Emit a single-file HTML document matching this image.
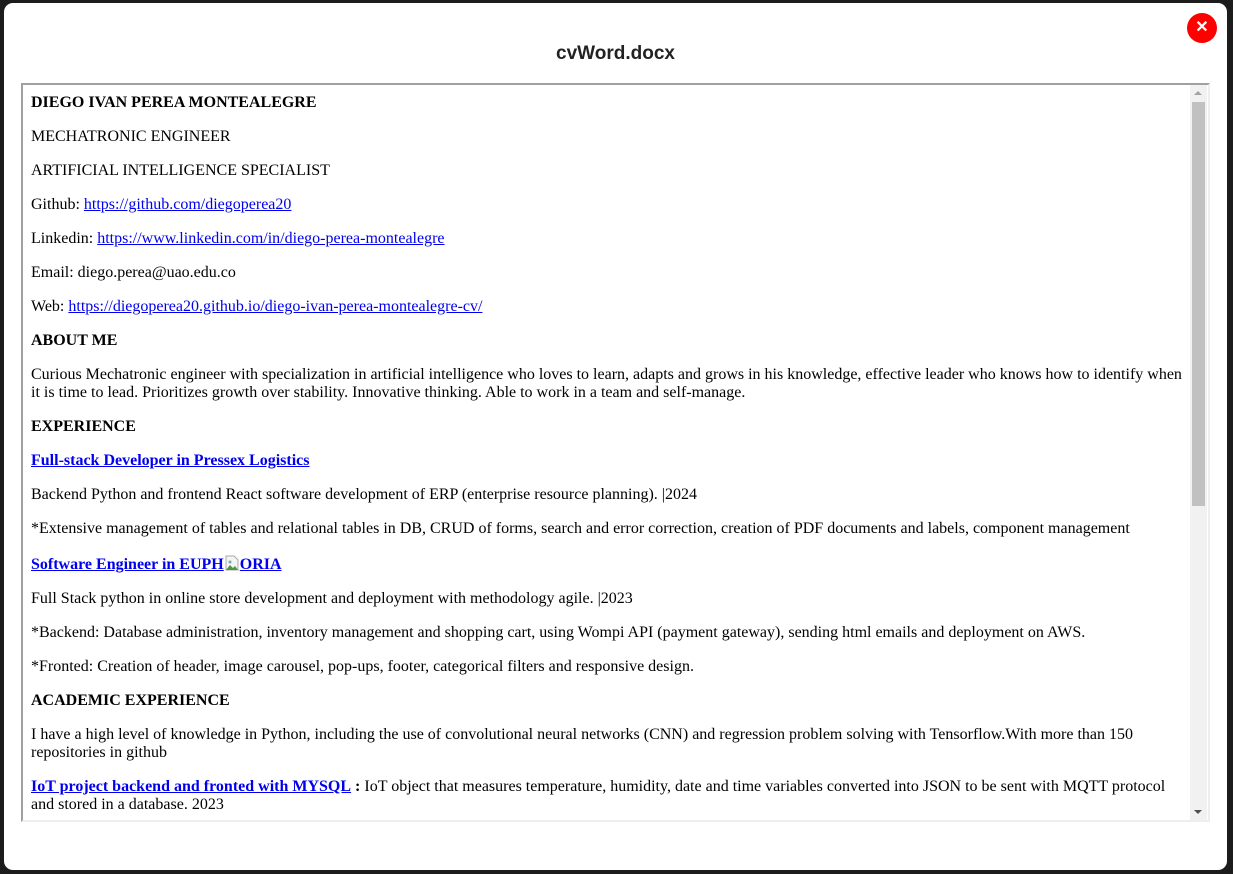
<!DOCTYPE html>
<html><head><meta charset="utf-8"><style>
html,body{margin:0;padding:0;}
body{width:1233px;height:874px;background:#1c1c1c;position:relative;overflow:hidden;font-family:"Liberation Serif",serif;}
.modal{position:absolute;left:4px;top:3px;width:1223px;height:867px;background:#fff;border-radius:9px;}
.title{position:absolute;left:0;right:0;top:40px;text-align:center;font:bold 19px "Liberation Sans",sans-serif;color:#222;}
.close{position:absolute;left:1183px;top:10px;width:30px;height:30px;border-radius:50%;background:#f00;color:#fff;font:bold 16px "Liberation Sans",sans-serif;text-align:center;line-height:30px;}
.frame{position:absolute;left:17px;top:80px;width:1185px;height:735px;border-top:2px solid #a0a0a0;border-left:2px solid #a0a0a0;border-right:2px solid #eee;border-bottom:2px solid #eee;overflow:hidden;}
.content{position:absolute;left:8px;top:9px;width:1152px;font-size:16px;line-height:18px;color:#000;}
.content p{margin:0 0 16px 0;}
a{color:#00e;text-decoration:underline;}
.sb{position:absolute;right:1px;top:0;width:17px;height:735px;background:#f1f1f1;}
.thumb{position:absolute;left:2px;top:17px;width:13px;height:404px;background:#c1c1c1;}
.up{position:absolute;left:4px;top:6px;width:0;height:0;border-left:4px solid transparent;border-right:4px solid transparent;border-bottom:4px solid #a3a3a3;}
.dn{position:absolute;left:4px;bottom:6px;width:0;height:0;border-left:4px solid transparent;border-right:4px solid transparent;border-top:4px solid #505050;}
</style></head><body>
<div class="modal">
<div class="title">cvWord.docx</div>
<div class="close">✕</div>
<div class="frame">
<div class="content">
<p><b>DIEGO IVAN PEREA MONTEALEGRE</b></p>
<p>MECHATRONIC ENGINEER</p>
<p>ARTIFICIAL INTELLIGENCE SPECIALIST</p>
<p>Github: <a>https://github.com/diegoperea20</a></p>
<p>Linkedin: <a>https://www.linkedin.com/in/diego-perea-montealegre</a></p>
<p>Email: diego.perea@uao.edu.co</p>
<p>Web: <a>https://diegoperea20.github.io/diego-ivan-perea-montealegre-cv/</a></p>
<p><b>ABOUT ME</b></p>
<p>Curious Mechatronic engineer with specialization in artificial intelligence who loves to learn, adapts and grows in his knowledge, effective leader who knows how to identify when it is time to lead. Prioritizes growth over stability. Innovative thinking. Able to work in a team and self-manage.</p>
<p><b>EXPERIENCE</b></p>
<p><a><b>Full-stack Developer in Pressex Logistics</b></a></p>
<p>Backend Python and frontend React software development of ERP (enterprise resource planning). |2024</p>
<p>*Extensive management of tables and relational tables in DB, CRUD of forms, search and error correction, creation of PDF documents and labels, component management</p>
<p style="padding-top:1px"><a><b>Software Engineer in EUPH<svg width="16" height="16" viewBox="0 0 16 16" style="vertical-align:-2px"><path d="M2 1h8l4 4v10H2z" fill="#f4f4f4" stroke="#aaa"/><path d="M2 15l4-5 3 3 2-2 3 4z" fill="#4a9a3a"/><circle cx="6" cy="7" r="1.5" fill="#7ab"/></svg>ORIA</b></a></p>
<p>Full Stack python in online store development and deployment with methodology agile. |2023</p>
<p>*Backend: Database administration, inventory management and shopping cart, using Wompi API (payment gateway), sending html emails and deployment on AWS.</p>
<p>*Fronted: Creation of header, image carousel, pop-ups, footer, categorical filters and responsive design.</p>
<p><b>ACADEMIC EXPERIENCE</b></p>
<p>I have a high level of knowledge in Python, including the use of convolutional neural networks (CNN) and regression problem solving with Tensorflow.With more than 150 repositories in github</p>
<p><a><b>IoT project backend and fronted with MYSQL</b></a> <b>:</b> IoT object that measures temperature, humidity, date and time variables converted into JSON to be sent with MQTT protocol and stored in a database. 2023</p>
<p>Lorem</p>
</div>
<div class="sb"><div class="up"></div><div class="thumb"></div><div class="dn"></div></div>
</div>
</div>
</body></html>
